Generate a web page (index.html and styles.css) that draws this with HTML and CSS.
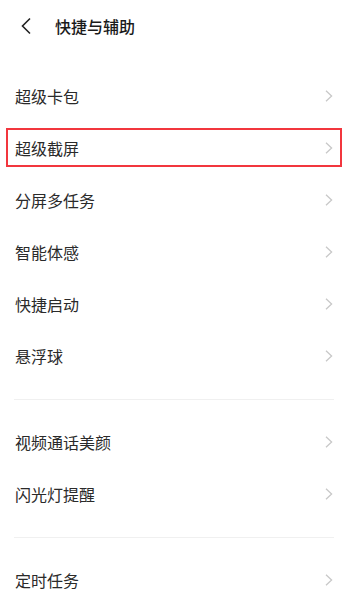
FILE: index.html
```html
<!DOCTYPE html>
<html lang="zh-CN">
<head>
    <meta charset="UTF-8">
    <meta name="viewport" content="width=device-width, initial-scale=1.0">
    <title>快捷与辅助</title>
    <link rel="stylesheet" href="styles.css">
</head>
<body>
    <div class="header">
        <svg class="back" width="12" height="18" viewBox="0 0 12 18">
            <path d="M10 1.5 L2.5 9 L10 16.5" fill="none" stroke="#222" stroke-width="1.6"/>
        </svg>
        <h1>快捷与辅助</h1>
    </div>

    <div class="list">
        <div class="row"><span>超级卡包</span><svg class="chev" viewBox="0 0 8 12"><path d="M1 0.8 L6.6 6 L1 11.2"/></svg></div>
        <div class="row marked"><span>超级截屏</span><svg class="chev" viewBox="0 0 8 12"><path d="M1 0.8 L6.6 6 L1 11.2"/></svg></div>
        <div class="row"><span>分屏多任务</span><svg class="chev" viewBox="0 0 8 12"><path d="M1 0.8 L6.6 6 L1 11.2"/></svg></div>
        <div class="row"><span>智能体感</span><svg class="chev" viewBox="0 0 8 12"><path d="M1 0.8 L6.6 6 L1 11.2"/></svg></div>
        <div class="row"><span>快捷启动</span><svg class="chev" viewBox="0 0 8 12"><path d="M1 0.8 L6.6 6 L1 11.2"/></svg></div>
        <div class="row"><span>悬浮球</span><svg class="chev" viewBox="0 0 8 12"><path d="M1 0.8 L6.6 6 L1 11.2"/></svg></div>

        <div class="divider"></div>

        <div class="row"><span>视频通话美颜</span><svg class="chev" viewBox="0 0 8 12"><path d="M1 0.8 L6.6 6 L1 11.2"/></svg></div>
        <div class="row"><span>闪光灯提醒</span><svg class="chev" viewBox="0 0 8 12"><path d="M1 0.8 L6.6 6 L1 11.2"/></svg></div>

        <div class="divider"></div>

        <div class="row"><span>定时任务</span><svg class="chev" viewBox="0 0 8 12"><path d="M1 0.8 L6.6 6 L1 11.2"/></svg></div>
    </div>
</body>
</html>
```

FILE: styles.css
```css
body {
    margin: 0;
    background: #fff;
    font-family: "Noto Sans CJK SC", "Noto Sans", sans-serif;
    color: #222;
    width: 348px;
}
.header {
    height: 52px;
    display: flex;
    align-items: center;
}
.back {
    margin-left: 20px;
    margin-right: 23px;
}
.header h1 {
    margin: 0;
    font-size: 16px;
    font-weight: 500;
    color: #1a1a1a;
}
.list {
    padding-top: 18px;
}
.row {
    position: relative;
    height: 52px;
    display: flex;
    align-items: center;
    justify-content: space-between;
    padding: 0 15px;
    font-size: 16px;
    color: #2a2a2a;
}
.chev {
    width: 8px;
    height: 12px;
    fill: none;
    stroke: #c8c8c8;
    stroke-width: 1.3;
}
.marked::after {
    content: "";
    position: absolute;
    left: 6px;
    right: 6px;
    top: 6px;
    bottom: 7px;
    border: 2px solid #f2363e;
}
.divider {
    height: 1px;
    background: #f0f0f0;
    margin: 17px 14px 16px;
}
```
